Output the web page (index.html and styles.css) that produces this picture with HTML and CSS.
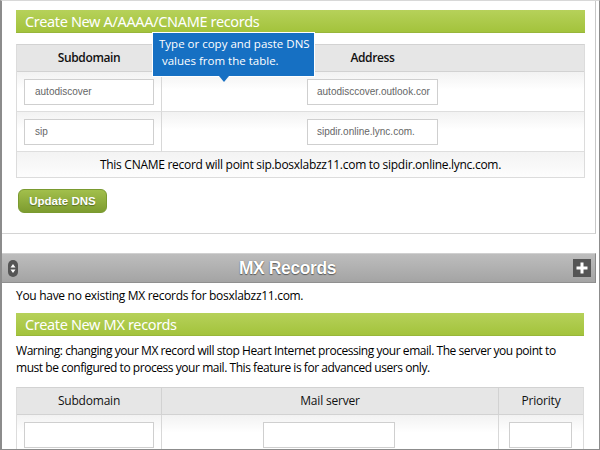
FILE: index.html
```html
<!DOCTYPE html>
<html>
<head>
<meta charset="utf-8">
<link rel="stylesheet" href="styles.css">
</head>
<body>
<div class="frame">
  <div class="panel">
    <div class="greenbar">Create New A/AAAA/CNAME records</div>
    <div class="tbl tbl1">
      <div class="hd c1">Subdomain</div>
      <div class="hd c2"></div>
      <div class="hd c3">Address</div>
      <div class="hd c4"></div>

      <div class="cell c1"><div class="inp">autodiscover</div></div>
      <div class="cell c2"></div>
      <div class="cell c3"><div class="inp">autodisccover.outlook.cor</div></div>
      <div class="cell c4"></div>

      <div class="cell c1"><div class="inp">sip</div></div>
      <div class="cell c2"></div>
      <div class="cell c3"><div class="inp">sipdir.online.lync.com.</div></div>
      <div class="cell c4"></div>

      <div class="note">This CNAME record will point sip.bosxlabzz11.com to sipdir.online.lync.com.</div>
    </div>
    <div class="btn">Update DNS</div>
    <div class="tooltip">Type or copy and paste DNS<br>&nbsp;values from the table.</div>
  </div>

  <div class="mx">
    <div class="mxhead">
      <span class="sorter">
        <svg width="10" height="17" viewBox="0 0 10 17"><rect x="0" y="0" width="10" height="17" rx="5" fill="#555"/><path d="M2.5 7.5 L5 4 L7.5 7.5 Z M2.5 9.5 L5 13 L7.5 9.5 Z" fill="#fff"/></svg>
      </span>
      <span class="mxtitle">MX Records</span>
      <span class="plus">
        <svg width="18" height="18" viewBox="0 0 18 18"><rect x="0" y="0" width="18" height="18" fill="#555"/><path d="M7.5 3.5 H10.5 V7.5 H14.5 V10.5 H10.5 V14.5 H7.5 V10.5 H3.5 V7.5 H7.5 Z" fill="#fff"/></svg>
      </span>
    </div>
    <div class="mxbody">
      <p class="txt none">You have no existing MX records for bosxlabzz11.com.</p>
      <div class="greenbar">Create New MX records</div>
      <p class="txt warn">Warning: changing your MX record will stop Heart Internet processing your email. The server you point to must be configured to process your mail. This feature is for advanced users only.</p>
      <div class="tbl tbl2">
        <div class="hd">Subdomain</div>
        <div class="hd">Mail server</div>
        <div class="hd last">Priority</div>
        <div class="cell"><div class="inp"></div></div>
        <div class="cell mid"><div class="inp"></div></div>
        <div class="cell last"><div class="inp small"></div></div>
      </div>
    </div>
  </div>
</div>
</body>
</html>
```

FILE: styles.css
```css
html, body {
  margin: 0;
  padding: 0;
  background: #fff;
}
.frame {
  width: 600px;
  height: 450px;
  box-sizing: border-box;
  border: 1px solid #8c8c8c;
  border-left: 2px solid #8c8c8c;
  border-top-color: #d8d8d8;
  overflow: hidden;
  position: relative;
  font-family: "Open Sans", "Noto Sans", sans-serif;
  color: #111;
}
.panel {
  position: relative;
  width: 594px;
  box-sizing: border-box;
  padding: 9px 10px 20px 14px;
  border-right: 1px solid #c8c8c8;
  border-bottom: 1px solid #d4d4d4;
  background: #fff;
}
.greenbar {
  height: 23px;
  box-sizing: border-box;
  background: linear-gradient(#b6d15a, #a3c33c);
  border-bottom: 1px solid #98b63a;
  color: #fff;
  font-family: "Noto Sans", sans-serif;
  font-size: 14.5px;
  letter-spacing: -0.35px;
  line-height: 23px;
  padding-left: 9px;
  white-space: nowrap;
}
.tbl {
  margin-top: 11px;
  display: grid;
  border: 1px solid #dcdcdc;
  border-top-color: #d2d2d2;
}
.tbl1 {
  grid-template-columns: 145px 138px 145px 1fr;
}
.hd {
  height: 26px;
  background: #e6e6e6;
  border-bottom: 1px solid #d2d2d2;
  font-size: 12px;
  font-weight: 600;
  letter-spacing: -0.35px;
  text-align: center;
  line-height: 26px;
  color: #111;
}
.tbl1 .hd.c1, .tbl1 .cell.c1 {
  border-right: 1px solid #d8d8d8;
}
.cell {
  height: 40px;
  box-sizing: border-box;
  border-bottom: 1px solid #dedede;
  background: linear-gradient(#f2f2f2, #ffffff 45%);
  padding: 7px 7px 0 7px;
}
.inp {
  height: 26px;
  box-sizing: border-box;
  border: 1px solid #cfcfcf;
  background: #fff;
  font-family: "Liberation Sans", Arial, sans-serif;
  font-size: 10px;
  color: #666;
  line-height: 24px;
  padding-left: 10px;
  white-space: nowrap;
  overflow: hidden;
}
.tbl1 .c3 .inp {
  padding-left: 9px;
}
.note {
  grid-column: 1 / -1;
  height: 25px;
  background: linear-gradient(#f3f3f3, #fdfdfd);
  text-align: center;
  font-size: 12px;
  letter-spacing: -0.28px;
  line-height: 25px;
  color: #000;
}
.btn {
  margin-top: 11px;
  margin-left: 2px;
  width: 89px;
  height: 24px;
  box-sizing: border-box;
  border-radius: 6px;
  background: linear-gradient(#a2bf4c, #7d9c2f);
  border: 1px solid #7a9a30;
  color: #fff;
  font-family: "Liberation Sans", Arial, sans-serif;
  font-weight: bold;
  font-size: 11.5px;
  text-align: center;
  line-height: 22px;
  text-shadow: 0 1px 1px rgba(0,0,0,0.35);
}
.tooltip {
  position: absolute;
  left: 150px;
  top: 31px;
  width: 163px;
  height: 45px;
  box-sizing: border-box;
  background: #1670c3;
  border: 1px solid #fff;
  color: #fff;
  font-family: "Open Sans", sans-serif;
  font-size: 11.5px;
  line-height: 17px;
  padding: 2px 0 0 6px;
  white-space: nowrap;
}
.tooltip::after {
  content: "";
  position: absolute;
  left: 66px;
  bottom: -6px;
  border-left: 5px solid transparent;
  border-right: 5px solid transparent;
  border-top: 6px solid #1670c3;
}
.mx {
  margin-top: 19px;
}
.mxhead {
  height: 30px;
  box-sizing: border-box;
  width: 594px;
  background: linear-gradient(#bdbdbd, #a4a4a4);
  border-top: 1px solid #d0d0d0;
  border-bottom: 1px solid #8f8f8f;
  border-right: 1px solid #8a8a8a;
  display: flex;
  align-items: center;
  justify-content: space-between;
  padding: 0 4px 0 6px;
}
.sorter, .plus {
  display: flex;
}
.mxtitle {
  color: #fff;
  font-family: "Liberation Sans", Arial, sans-serif;
  font-weight: bold;
  font-size: 17.5px;
  letter-spacing: -0.4px;
  text-shadow: 0 1px 1px rgba(0,0,0,0.45), 0 0 1px rgba(0,0,0,0.4);
  margin-right: 16px;
}
.mxbody {
  padding: 0 15px 0 14px;
}
.txt {
  margin: 0;
  font-size: 12px;
  letter-spacing: -0.3px;
  color: #000;
}
.none {
  line-height: 16px;
  padding-top: 5px;
}
.mxbody .greenbar {
  margin-top: 9px;
}
.warn {
  margin-top: 6px;
  line-height: 17px;
  letter-spacing: -0.45px;
}
.tbl2 {
  margin-top: 11px;
  grid-template-columns: 145px 337px 1fr;
}
.tbl2 .hd {
  font-weight: 400;
  letter-spacing: -0.2px;
  border-right: 1px solid #d2d2d2;
}
.tbl2 .hd.last {
  border-right: none;
}
.tbl2 .cell {
  border-right: 1px solid #d8d8d8;
}
.tbl2 .cell.mid {
  padding-left: 101px;
  padding-right: 103px;
}
.tbl2 .cell.last {
  border-right: none;
  padding-left: 10px;
  padding-right: 11px;
}
```
